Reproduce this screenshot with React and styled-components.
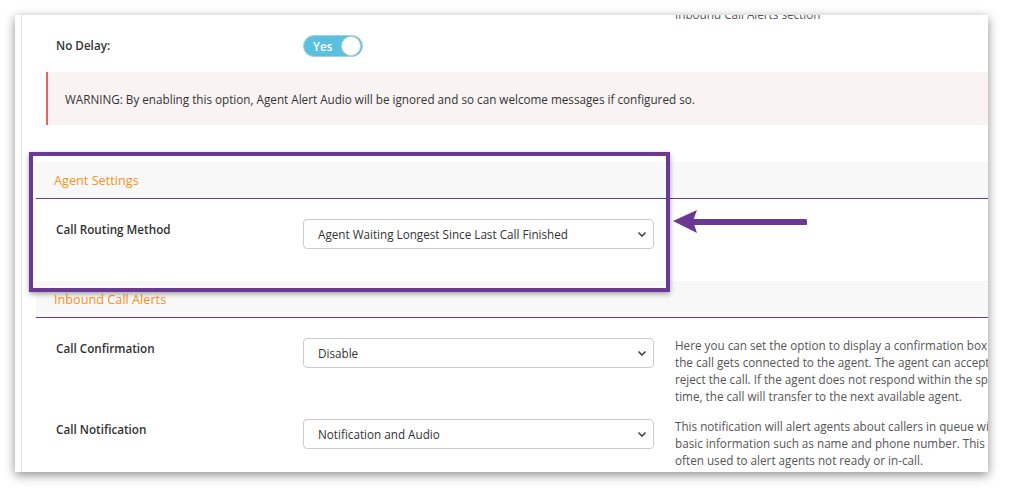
import React from 'react';
import styled, { createGlobalStyle } from 'styled-components';

const Global = createGlobalStyle`
  body { margin: 0; background: #fff; font-family: "Open Sans", "Liberation Sans", sans-serif; color: #333; }
`;

const Frame = styled.div`
  padding: 15px 25px 25px 15px;
`;

const Panel = styled.div`
  position: relative;
  width: 973px;
  height: 457px;
  background: #fff;
  overflow: hidden;
  box-shadow: 0 3px 10px rgba(0,0,0,0.45);
  border-left: 6px solid #fff;
  box-sizing: border-box;
  &::before {
    content: '';
    position: absolute;
    left: 0; top: 0; bottom: 0;
    width: 1px;
    background: #e4e4e4;
  }
`;

const Content = styled.div`
  margin-left: 15px;
`;

const Row = styled.div`
  display: grid;
  grid-template-columns: 226px 351px 1fr;
  gap: 0 21px;
  padding: ${p => p.$pad || '20px 0 0 20px'};
  height: ${p => p.$h}px;
  box-sizing: border-box;
  align-items: start;
`;

const Label = styled.div`
  font-size: 11.7px;
  font-weight: 600;
  color: #333;
  padding-top: ${p => p.$top || 2}px;
`;

const Desc = styled.div`
  font-size: 11.7px;
  line-height: 17px;
  color: #555;
  white-space: nowrap;
  margin-top: ${p => p.$top || 0}px;
`;

const Toggle = styled.div`
  width: 60px;
  height: 22px;
  border-radius: 11px;
  background: #5bc0de;
  border: 1px solid #9fd3e4;
  box-sizing: border-box;
  display: flex;
  align-items: center;
  justify-content: space-between;
  padding: 0 1px 0 9px;
  color: #fff;
  font-size: 11.7px;
  font-weight: 600;
`;

const Knob = styled.div`
  width: 20px;
  height: 20px;
  border-radius: 50%;
  background: #fff;
  border: 1px solid #ccc;
  box-sizing: border-box;
`;

const Warning = styled.div`
  margin-left: 10px;
  height: 53px;
  background: #f9f3f3;
  border-left: 2px solid #e2675a;
  display: flex;
  align-items: center;
  padding-left: 17px;
  font-size: 11.7px;
  color: #333;
`;

const SectionHead = styled.div`
  margin-top: ${p => p.$mt || 0}px;
  height: 36px;
  background: #f8f8f8;
  border-bottom: 1px solid #6b3a96;
  display: flex;
  align-items: center;
  padding-left: 18px;
  color: #f7931e;
  font-size: 12.7px;
`;

const Select = styled.div`
  height: 30px;
  border: 1px solid #ccc;
  border-radius: 4px;
  box-sizing: border-box;
  display: flex;
  align-items: center;
  justify-content: space-between;
  padding: 0 6px 0 14px;
  font-size: 11.7px;
  color: #333;
  background: #fff;
`;

const Highlight = styled.div`
  position: absolute;
  left: 8px;
  top: 137px;
  width: 641px;
  height: 140px;
  border: 4px solid #6b3894;
  box-sizing: border-box;
  box-shadow: 0 2px 5px rgba(0,0,0,0.35);
`;

const Arrow = styled.svg`
  position: absolute;
  left: 646px;
  top: 192px;
`;

const Chevron = () => (
  <svg width="10" height="10" viewBox="0 0 10 10">
    <path d="M1.5 3.5 L5 7 L8.5 3.5" fill="none" stroke="#444" strokeWidth="1.6" />
  </svg>
);

export default function App() {
  return (
    <>
      <Global />
      <Frame>
        <Panel>
          <Content>
            <Row $h={57} $pad="20px 0 0 20px">
              <Label $top={2}>No Delay:</Label>
              <Toggle>Yes<Knob /></Toggle>
              <Desc $top={-29}>Inbound Call Alerts section</Desc>
            </Row>
            <Warning>WARNING: By enabling this option, Agent Alert Audio will be ignored and so can welcome messages if configured so.</Warning>
            <SectionHead $mt={37}>Agent Settings</SectionHead>
            <Row $h={82}>
              <Label $top={0}>Call Routing Method</Label>
              <Select>Agent Waiting Longest Since Last Call Finished<Chevron /></Select>
              <div />
            </Row>
            <SectionHead>Inbound Call Alerts</SectionHead>
            <Row $h={101}>
              <Label $top={0}>Call Confirmation</Label>
              <Select>Disable<Chevron /></Select>
              <Desc $top={-1}>
                Here you can set the option to display a confirmation box when<br />
                the call gets connected to the agent. The agent can accept or<br />
                reject the call. If the agent does not respond within the specified<br />
                time, the call will transfer to the next available agent.
              </Desc>
            </Row>
            <Row $h={60} $pad="0 0 0 20px">
              <Label $top={0}>Call Notification</Label>
              <Select>Notification and Audio<Chevron /></Select>
              <Desc $top={-1}>
                This notification will alert agents about callers in queue with<br />
                basic information such as name and phone number. This is<br />
                often used to alert agents not ready or in-call.
              </Desc>
            </Row>
          </Content>
          <Highlight />
          <Arrow width="140" height="36" viewBox="0 0 140 36">
            <path d="M138 15 L22 15" stroke="#6b3894" strokeWidth="6" strokeLinecap="round" fill="none" />
            <path d="M6 14 L30 3 L26 14 L30 26 Z" fill="#6b3894" />
          </Arrow>
        </Panel>
      </Frame>
    </>
  );
}
